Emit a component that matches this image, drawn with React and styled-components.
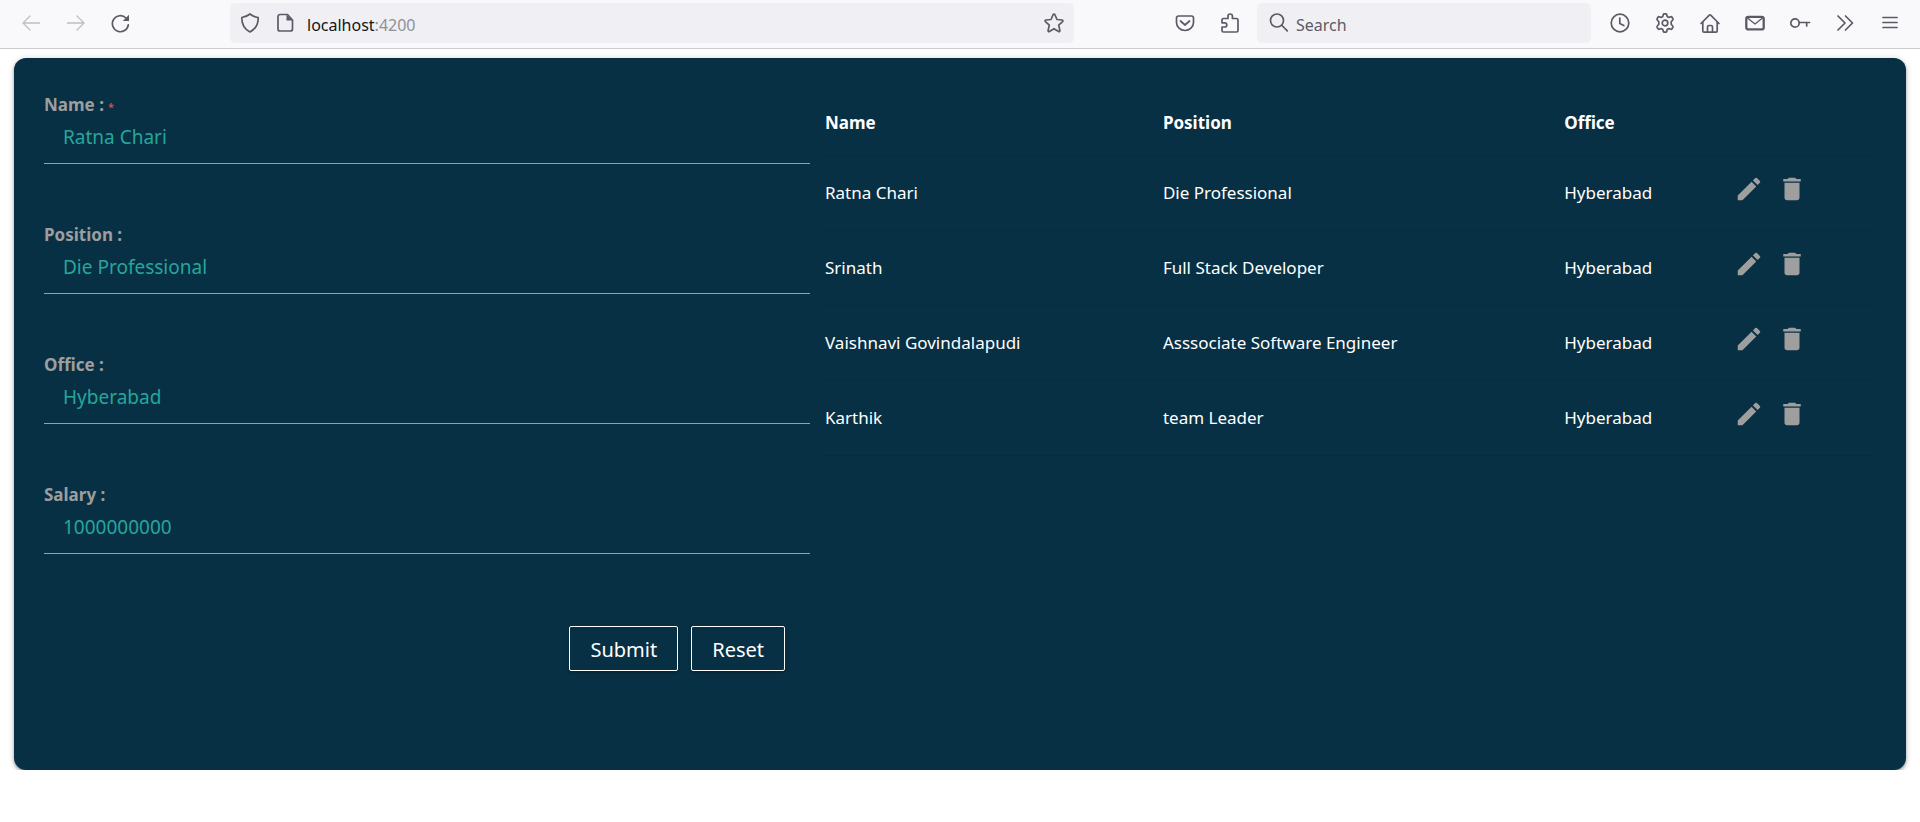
import React from "react";
import styled, { createGlobalStyle } from "styled-components";

const GlobalStyle = createGlobalStyle`
  *, *::before, *::after { box-sizing: border-box; }
  body {
    margin: 0;
    background: #fff;
    font-family: "Noto Sans", "Open Sans", sans-serif;
  }
`;

const Toolbar = styled.header`
  display: flex;
  align-items: center;
  height: 49px;
  padding: 0 8px 2px;
  background: #f9f9fb;
  border-bottom: 1px solid #ccc;
`;

const ToolGroup = styled.div`
  display: flex;
  flex: none;
`;

const ToolButton = styled.button`
  display: flex;
  align-items: center;
  justify-content: center;
  width: ${(p) => p.$width || 45}px;
  height: 40px;
  flex: none;
  padding: 0;
  border: 0;
  background: none;
  color: ${(p) => (p.$muted ? "#bebec3" : "#5b5b66")};
`;

const Glyph = styled.svg`
  display: block;
  flex: none;
  fill: none;
  stroke: currentColor;
  stroke-width: 1.7;
  stroke-linecap: round;
  stroke-linejoin: round;
`;

const BarBox = styled.div`
  display: flex;
  align-items: center;
  flex: ${(p) => p.$grow} 1 0;
  min-width: 0;
  height: 40px;
  margin: 0 ${(p) => p.$right}px 0 ${(p) => p.$left}px;
  padding-left: ${(p) => p.$inset}px;
  border-radius: 5px;
  background: #f0f0f4;
  color: #5b5b66;
`;

const Address = styled.div`
  flex: 1;
  min-width: 0;
  padding: 4px 0 0 4px;
  font-size: 16px;
  line-height: 24px;
  color: #8f8f98;

  span { color: #15141a; }
`;

const SearchInput = styled.input`
  flex: 1;
  min-width: 0;
  padding: 4px 0 0 7px;
  border: 0;
  outline: 0;
  background: none;
  font: 16px/24px "Noto Sans", "Open Sans", sans-serif;
  color: #15141a;

  &::placeholder { color: #5b5b66; opacity: 1; }
`;

const Card = styled.main`
  display: flex;
  gap: 10px;
  margin: 9px 14px 0;
  padding: 35px 30px 99px;
  border-radius: 12px;
  background: #083044;
  box-shadow: 0 2px 3px rgba(0, 0, 0, 0.28), 0 1px 6px rgba(0, 0, 0, 0.2);
`;

const Form = styled.form`
  flex: 766 1 0;
  min-width: 0;
`;

const Field = styled.div`
  margin-bottom: 59px;
`;

const Label = styled.label`
  display: block;
  font-size: 17px;
  font-weight: 700;
  line-height: 24px;
  color: #9e9e9e;
`;

const Required = styled.span`
  font-size: 10px;
  line-height: 1;
  color: #f44336;
`;

const TextInput = styled.input`
  display: block;
  width: 100%;
  height: 47px;
  padding: 0 19px 6px;
  border: 0;
  border-bottom: 1px solid #9e9e9e;
  border-radius: 0;
  outline: 0;
  background: none;
  font: 19px/28px "Noto Sans", "Open Sans", sans-serif;
  color: #26a69a;
`;

const Actions = styled.div`
  display: flex;
  justify-content: flex-end;
  gap: 13px;
  padding: 13px 25px 0 0;
`;

const FormButton = styled.button`
  height: 45px;
  padding: 3px 20px 0;
  border: 1px solid #fff;
  border-radius: 2px;
  background: transparent;
  box-shadow: 0 2px 3px rgba(0, 0, 0, 0.25);
  font: 20px/28px "Noto Sans", "Open Sans", sans-serif;
  color: #fff;
`;

const ListPane = styled.section`
  flex: 1056 1 0;
  min-width: 0;
`;

const Table = styled.table`
  width: 100%;
  border-collapse: collapse;
  table-layout: fixed;
  font-size: 17px;
  line-height: 24px;
  color: #fff;
`;

const HeadCell = styled.th`
  width: ${(p) => p.$width};
  height: 62px;
  padding: 0 5px 2px;
  border-bottom: 1px solid #082b3f;
  text-align: left;
  font-weight: 700;
`;

const Cell = styled.td`
  height: 75px;
  padding: 1px 5px 0;
  border-bottom: 1px solid #082b3f;
`;

const RowActions = styled.div`
  display: flex;
  gap: 13px;
  padding: 0 0 8px 1px;
`;

const IconButton = styled.button`
  width: 30px;
  height: 30px;
  padding: 0;
  border: 0;
  background: none;
  color: #9e9e9e;

  svg { display: block; fill: currentColor; }
`;

const icons = {
  back: <path d="M18.500 10H2M9 3L2 10l7 7" strokeWidth="1.300" />,
  forward: <path d="M1.500 10H18M11 3l7 7-7 7" strokeWidth="1.300" />,
  reload: (
    <>
      <path d="M17.300 11.800A8 8 0 1 1 15 5" />
      <path d="M18 1.800v6.200h-6.200z" fill="currentColor" stroke="none" />
    </>
  ),
  shield: <path d="M10 1C7.500 3 5 4 1.800 4.500 1.700 10.500 3.500 15.500 10 19c6.500-3.500 8.300-8.500 8.200-14.500C15 4 12.500 3 10 1z" />,
  page: (
    <>
      <path d="M4 1.500h7.500l5 5.500v9a2 2 0 0 1-2 2H4a2 2 0 0 1-2-2V3.500a2 2 0 0 1 2-2z" />
      <path d="M10.500 1.500v6h6z" fill="currentColor" stroke="none" />
    </>
  ),
  star: <path d="M9.200 1.500a.9.9 0 0 1 1.600 0l2.200 5 5 .5c.9.1 1.200 1 .6 1.600l-3.900 3.500 1.200 5.400c.2.900-.6 1.400-1.300 1L10 15.700l-4.600 2.800c-.7.400-1.500-.1-1.300-1l1.200-5.400-3.900-3.500c-.6-.6-.3-1.500.6-1.600l5-.5z" />,
  pocket: (
    <>
      <path d="M3.500 3h13a2 2 0 0 1 2 2v4.500a8.500 8 0 0 1-17 0V5a2 2 0 0 1 2-2z" />
      <path d="M5.500 8l4.500 4 4.500-4" />
    </>
  ),
  puzzle: <path d="M3.500 5.500H8V3.200a2.200 2.200 0 0 1 4.400 0v2.300h4.100a1.500 1.500 0 0 1 1.500 1.500v10.500a1.500 1.500 0 0 1-1.500 1.500h-13A1.500 1.500 0 0 1 2 17.500V14h2.700a2 2 0 0 0 0-4.200H2V7a1.500 1.500 0 0 1 1.500-1.500z" />,
  search: (
    <>
      <circle cx="8" cy="7.500" r="6.500" />
      <path d="M13 12.500l5.300 5.300" />
    </>
  ),
  clock: (
    <>
      <circle cx="10" cy="10" r="8.800" />
      <path d="M9.800 5v5.500l4 2" />
    </>
  ),
  gear: (
    <>
      <path d="M8.300 1.500a1 1 0 0 1 1-.7h1.400a1 1 0 0 1 1 .7l.5 2 1.600.9 2-.6a1 1 0 0 1 1.200.5l.9 1.500a1 1 0 0 1-.2 1.200l-1.500 1.700v2.600l1.500 1.700a1 1 0 0 1 .2 1.200l-.9 1.500a1 1 0 0 1-1.200.5l-2-.6-1.600.9-.5 2a1 1 0 0 1-1 .7H9.300a1 1 0 0 1-1-.7l-.5-2-1.600-.9-2 .6a1 1 0 0 1-1.200-.5l-.9-1.500a1 1 0 0 1 .2-1.200l1.500-1.700V8.700L2.300 7a1 1 0 0 1-.2-1.200L3 4.300a1 1 0 0 1 1.200-.5l2 .6 1.600-.9z" />
      <circle cx="10" cy="10" r="2.800" />
    </>
  ),
  home: (
    <>
      <path d="M1 10.500L9.300 2.200a1 1 0 0 1 1.400 0L19 10.500" />
      <path d="M2.800 9v9a1.200 1.200 0 0 0 1.200 1.200h12a1.200 1.200 0 0 0 1.200-1.200V9M7.500 19v-5a1.500 1.500 0 0 1 1.500-1.500h2a1.500 1.500 0 0 1 1.500 1.500v5" />
    </>
  ),
  mail: (
    <>
      <rect x="1.300" y="3.800" width="17.400" height="12.600" rx="2" strokeWidth="2.300" />
      <path d="M2.500 5l7.500 6 7.500-6" strokeWidth="1.300" />
    </>
  ),
  key: (
    <>
      <circle cx="5" cy="10" r="4.200" />
      <path d="M9.500 9.500h10M16.700 9.500v3.500" />
    </>
  ),
  more: <path d="M3 3l7 7-7 7M10.500 3l7 7-7 7" />,
  menu: <path d="M3 4.500h14M3 9.500h14M3 14.500h14" />,
};

const Icon = ({ name }) => (
  <Glyph width="20" height="20" viewBox="0 0 20 20" overflow="visible" aria-hidden="true">
    {icons[name]}
  </Glyph>
);

const Tool = ({ name, label, muted, width }) => (
  <ToolButton type="button" aria-label={label} $muted={muted} $width={width}>
    <Icon name={name} />
  </ToolButton>
);

const fields = [
  { id: "name", label: "Name :", value: "Ratna Chari", required: true },
  { id: "position", label: "Position :", value: "Die Professional" },
  { id: "office", label: "Office :", value: "Hyberabad" },
  { id: "salary", label: "Salary :", value: "1000000000" },
];

const employees = [
  ["Ratna Chari", "Die Professional", "Hyberabad"],
  ["Srinath", "Full Stack Developer", "Hyberabad"],
  ["Vaishnavi Govindalapudi", "Asssociate Software Engineer", "Hyberabad"],
  ["Karthik", "team Leader", "Hyberabad"],
];

const BrowserBar = () => (
  <Toolbar>
    <ToolGroup>
      <Tool name="back" label="Back" muted />
      <Tool name="forward" label="Forward" muted />
      <Tool name="reload" label="Reload" />
    </ToolGroup>
    <BarBox $grow={842} $left={87} $right={88} $inset={2}>
      <Tool name="shield" label="Tracking protection" width={36} />
      <Tool name="page" label="Site information" width={35} />
      <Address>
        <span>localhost</span>:4200
      </Address>
      <Tool name="star" label="Bookmark" width={40} />
    </BarBox>
    <ToolGroup>
      <Tool name="pocket" label="Save to Pocket" />
      <Tool name="puzzle" label="Extensions" />
    </ToolGroup>
    <BarBox $grow={322} $left={5} $right={6} $inset={12}>
      <Icon name="search" />
      <SearchInput type="search" aria-label="Search" placeholder="Search" />
    </BarBox>
    <ToolGroup>
      <Tool name="clock" label="History" />
      <Tool name="gear" label="Settings" />
      <Tool name="home" label="Home" />
      <Tool name="mail" label="Mail" />
      <Tool name="key" label="Passwords" />
      <Tool name="more" label="More tools" />
      <Tool name="menu" label="Menu" />
    </ToolGroup>
  </Toolbar>
);

export default function App() {
  return (
    <>
      <GlobalStyle />
      <BrowserBar />
      <Card>
        <Form onSubmit={(e) => e.preventDefault()}>
          {fields.map((f) => (
            <Field key={f.id}>
              <Label htmlFor={f.id}>
                {f.label} {f.required && <Required>*</Required>}
              </Label>
              <TextInput id={f.id} type="text" defaultValue={f.value} />
            </Field>
          ))}
          <Actions>
            <FormButton type="submit">Submit</FormButton>
            <FormButton type="reset">Reset</FormButton>
          </Actions>
        </Form>
        <ListPane>
          <Table>
            <thead>
              <tr>
                <HeadCell $width="32%">Name</HeadCell>
                <HeadCell $width="38%">Position</HeadCell>
                <HeadCell $width="16%">Office</HeadCell>
                <HeadCell $width="14%" aria-label="Actions" />
              </tr>
            </thead>
            <tbody>
              {employees.map(([name, position, office]) => (
                <tr key={name}>
                  <Cell>{name}</Cell>
                  <Cell>{position}</Cell>
                  <Cell>{office}</Cell>
                  <Cell>
                    <RowActions>
                      <IconButton type="button" aria-label={`Edit ${name}`}>
                        <svg width="30" height="30" viewBox="0 0 24 24">
                          <path d="M3 17.250V21h3.750L17.810 9.940l-3.750-3.750L3 17.250zM20.710 7.040a1 1 0 0 0 0-1.410l-2.340-2.340a1 1 0 0 0-1.410 0l-1.830 1.830 3.750 3.750 1.830-1.830z" />
                        </svg>
                      </IconButton>
                      <IconButton type="button" aria-label={`Delete ${name}`}>
                        <svg width="30" height="30" viewBox="0 0 24 24">
                          <path d="M6 19c0 1.100.9 2 2 2h8c1.100 0 2-.9 2-2V7H6v12zM19 4h-3.500l-1-1h-5l-1 1H5v2h14V4z" />
                        </svg>
                      </IconButton>
                    </RowActions>
                  </Cell>
                </tr>
              ))}
            </tbody>
          </Table>
        </ListPane>
      </Card>
    </>
  );
}
